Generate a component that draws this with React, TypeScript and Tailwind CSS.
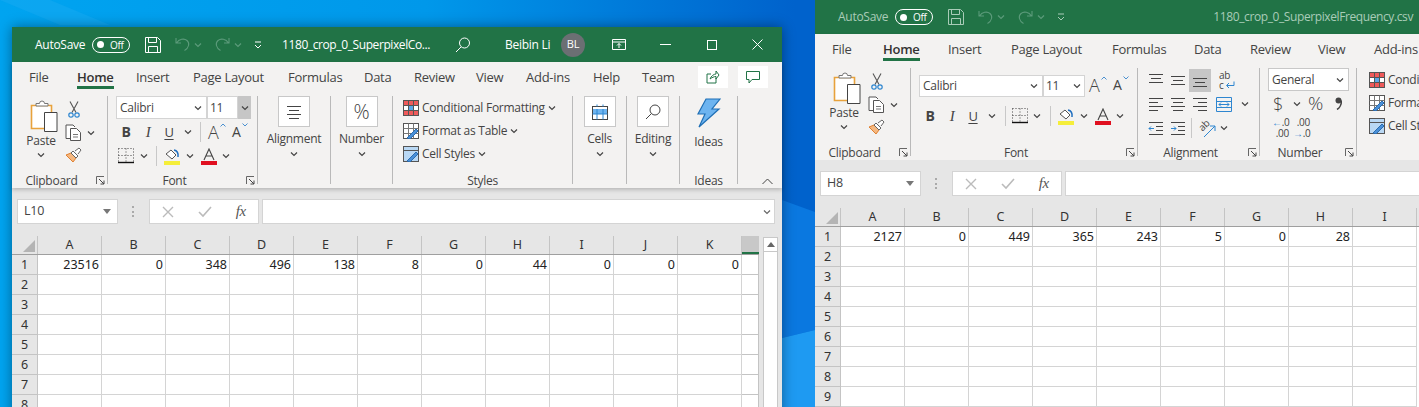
import React from "react";

const ui = { fontFamily: '"Open Sans", "Noto Sans", sans-serif' };

function Chev({ c = "#444", className = "" }: { c?: string; className?: string }) {
  return (
    <svg width="8" height="6" viewBox="0 0 8 6" className={`shrink-0 ${className}`}>
      <path d="M1 1.500 L4 4.500 L7 1.500" fill="none" stroke={c} strokeWidth="1.200" />
    </svg>
  );
}

function Launcher() {
  return (
    <svg width="9" height="9" viewBox="0 0 9 9" className="absolute right-[2px] bottom-[-1px]">
      <path d="M.5 8V.5H8" fill="none" stroke="#666" />
      <path d="M3 3l5 5M8 4.500V8H4.500" fill="none" stroke="#444" />
    </svg>
  );
}

function Group({ w, label, launcher, children }: { w: number; label: string; launcher?: boolean; children: React.ReactNode }) {
  return (
    <div className="relative flex h-[88px] shrink-0 flex-col border-r border-[#b9b9b9]" style={{ width: w }}>
      <div className="min-h-0 flex-1">{children}</div>
      <div className={`mb-[-4px] h-[14px] text-center text-[12px] leading-[14px] text-[#444] ${launcher ? "pr-[16px]" : ""}`}>{label}</div>
      {launcher && <Launcher />}
    </div>
  );
}

function PasteIcon() {
  return (
    <svg width="28" height="32" viewBox="0 0 28 32" className="shrink-0">
      <path d="M1.500 5.500h20v23h-20z" fill="#fff" stroke="#e8a23c" strokeWidth="1.600" />
      <path d="M6 6V3.500h3.500a2.500 2.500 0 0 1 5 0H18V6z" fill="#fff" stroke="#777" />
      <path d="M14.500 12.500h12.500v19H14.500z" fill="#fff" stroke="#444" />
    </svg>
  );
}
function Scissors() {
  return (
    <svg width="12" height="17" viewBox="0 0 12 17" className="ml-[3px]">
      <path d="M2 .5l6 11M10 .5l-6 11" fill="none" stroke="#555" strokeWidth="1.100" />
      <circle cx="3" cy="14" r="2.200" fill="none" stroke="#2e86d0" strokeWidth="1.200" />
      <circle cx="9" cy="14" r="2.200" fill="none" stroke="#2e86d0" strokeWidth="1.200" />
    </svg>
  );
}
function CopyIcon() {
  return (
    <svg width="17" height="17" viewBox="0 0 17 17">
      <path d="M5 14.500H1V1h7l2 2" fill="#fff" stroke="#555" />
      <path d="M5.500 4.500h6l4 4v8h-10z" fill="#fff" stroke="#555" />
      <path d="M8 10.500h5M8 13h5" stroke="#777" />
    </svg>
  );
}
function Brush() {
  return (
    <svg width="17" height="16" viewBox="0 0 17 16">
      <path d="M1 8l5-2 5 5-3 4z" fill="#f5b880" stroke="#e08030" />
      <path d="M6 6l5 5 2-2-5-5z" fill="#fff" stroke="#666" />
      <path d="M10 4l4-3 2 2-3 4" fill="#fff" stroke="#666" />
    </svg>
  );
}
function BorderIcon() {
  return (
    <svg width="16" height="16" viewBox="0 0 16 16">
      <path d="M.5.500h15M.5 7.500h15M.5.500v13M8 .500v13M15.500.500v13" stroke="#444" strokeDasharray="1 2" fill="none" />
      <path d="M0 14.500h16" stroke="#111" strokeWidth="1.400" />
    </svg>
  );
}
function FillIcon() {
  return (
    <svg width="17" height="17" viewBox="0 0 17 17">
      <path d="M2 6l5-4 5 5-4 4z" fill="#fff" stroke="#555" />
      <path d="M10 2c3 .5 4.500 3 4 7" fill="none" stroke="#1f6fc0" strokeWidth="1.500" />
      <rect x="0" y="13" width="16" height="4" fill="#f5ee3a" />
    </svg>
  );
}
function FontColor() {
  return (
    <svg width="16" height="17" viewBox="0 0 16 17">
      <path d="M3 12L8 1l5 11M5 8h6" fill="none" stroke="#444" strokeWidth="1.100" />
      <rect x="0" y="13" width="16" height="4" fill="#e01020" />
    </svg>
  );
}
function GrowA({ up }: { up: boolean }) {
  return (
    <div className="relative flex items-start" style={{ width: up ? 18 : 16 }}>
      <span className={up ? "text-[18px] font-light leading-[20px] text-[#444]" : "text-[14px] leading-[20px] text-[#444]"}>A</span>
      <svg width="6" height="4" viewBox="0 0 6 4" className="absolute right-0 top-[1px]">
        <path d={up ? "M.5 3.500L3 1l2.500 2.500" : "M.5.500L3 3l2.500-2.500"} fill="none" stroke="#4a90d0" />
      </svg>
    </div>
  );
}
function BIU() {
  return (
    <>
      <span className="w-[22px] text-center text-[14px] font-bold leading-[20px] text-[#444]">B</span>
      <span className="w-[22px] text-center text-[15px] italic leading-[20px] text-[#444]" style={{ fontFamily: '"Liberation Serif", serif' }}>I</span>
      <span className="w-[20px] text-center text-[13px] leading-[20px] text-[#444] underline underline-offset-2">U</span>
    </>
  );
}
function VSep({ h = 20 }: { h?: number }) {
  return <div className="w-px shrink-0 bg-[#c8c8c8]" style={{ height: h }} />;
}

function ClipboardGroup() {
  return (
    <Group w={96} label="Clipboard" launcher>
      <div className="flex pl-[18px] pt-[4px]">
        <div className="flex w-[22px] flex-col items-center">
          <div className="w-[22px]"><PasteIcon /></div>
          <span className="mt-[1px] text-[12px] leading-[16px] text-[#444]">Paste</span>
          <Chev className="mt-[3px]" />
        </div>
        <div className="ml-[13px] flex flex-col gap-[6px] pt-[1px]">
          <Scissors />
          <div className="flex items-center gap-[5px]"><CopyIcon /><Chev /></div>
          <Brush />
        </div>
      </div>
    </Group>
  );
}

function BigGroup({ w, label, icon }: { w: number; label: string; icon: React.ReactNode }) {
  return (
    <Group w={w} label="">
      <div className="flex flex-col items-center" style={{ width: w - 1 }}>
        <div className="flex h-[31px] w-[32px] items-center justify-center border border-[#c8c8c8] bg-white">{icon}</div>
        <span className="mt-[3px] text-[12px] leading-[18px] text-[#444]">{label}</span>
        <Chev className="mt-[3px]" />
      </div>
    </Group>
  );
}

function AlignLines({ kind, c = "#444" }: { kind: "top" | "mid" | "bot" | "l" | "c" | "r"; c?: string }) {
  const m: Record<string, string> = {
    top: "M1 2.500h14M3 6.500h10M1 10.500h14",
    mid: "M1 4.500h14M3 8.500h10M1 12.500h14",
    bot: "M1 6.500h14M3 10.500h10M1 14.500h14",
    l: "M1 2.500h14M1 6.500h9M1 10.500h14M1 14.500h9",
    c: "M1 2.500h14M3 6.500h10M1 10.500h14M3 14.500h10",
    r: "M1 2.500h14M6 6.500h9M1 10.500h14M6 14.500h9",
  };
  return (
    <svg width="16" height="16" viewBox="0 0 16 16" className="shrink-0"><path d={m[kind]} stroke={c} fill="none" /></svg>
  );
}

function IndentIcon({ inc }: { inc?: boolean }) {
  return (
    <svg width="16" height="16" viewBox="0 0 16 16" className="shrink-0">
      <path d="M1 2.500h14M8 6.500h7M8 10.500h7M1 14.500h14" stroke="#444" fill="none" />
      <path d={inc ? "M1 8.500h5M4 6.500l2 2-2 2" : "M1 8.500h5M3 6.500l-2 2 2 2"} stroke="#2e86d0" fill="none" />
    </svg>
  );
}

function StyleRow({ kind, label, chev }: { kind: 0 | 1 | 2; label: string; chev?: boolean }) {
  return (
    <div className="flex h-[23px] items-center gap-[3px] whitespace-nowrap text-[12px] text-[#444]">
      <svg width="16" height="16" viewBox="0 0 16 16" className="shrink-0">
        {kind === 0 ? (
          <>
            <rect x=".5" y=".5" width="15" height="15" fill="#fff" stroke="#555" />
            <rect x="1" y="1" width="14" height="4.500" fill="#ef5a5a" />
            <rect x="1" y="10.500" width="14" height="4.500" fill="#ef5a5a" />
            <rect x="6" y="5.500" width="4" height="5" fill="#5aa8e8" />
            <path d="M5.500.500v15M10.500.500v15M.5 5.500h15M.5 10.500h15" stroke="#555" />
          </>
        ) : (
          <>
            <rect x=".5" y=".5" width="15" height="15" fill={kind === 1 ? "#fff" : "#b9d8f4"} stroke="#555" />
            {kind === 1 && <path d="M5.500.500v15M10.500.500v15M.5 5.500h15M.5 10.500h15" stroke="#777" />}
            {kind === 2 && <path d="M.5 4.500h15" stroke="#555" />}
            <path d="M4 15l9-9 2 2-8 8z" fill="#4a90d8" stroke="#2a6cb0" />
          </>
        )}
      </svg>
      <span>{label}</span>
      {chev && <Chev />}
    </div>
  );
}

function IdeasGroup() {
  return (
    <Group w={58} label="Ideas">
      <div className="flex flex-col items-center pt-[2px]">
        <svg width="24" height="30" viewBox="0 0 24 30">
          <path d="M9 1h14L15 11h7L2 29l6-13H1z" fill="#6db4f0" stroke="#1f6fb5" strokeWidth="1.200" />
        </svg>
        <span className="mt-[5px] text-[12px] leading-[18px] text-[#444]">Ideas</span>
      </div>
    </Group>
  );
}

function TitleIcons({ dim }: { dim?: boolean }) {
  const c = dim ? "#a9ccb8" : "#fff";
  return (
    <>
      <svg width="16" height="16" viewBox="0 0 16 16" className="shrink-0">
        <path d="M.5.500h12l3 3v12H.5z M3.500.500v5h8v-5 M3.500 15.500v-6h9v6" fill="none" stroke={c} />
      </svg>
      <div className="ml-[14px] flex items-center gap-[4px]">
        <svg width="15" height="15" viewBox="0 0 15 15"><path d="M1 1v5h5M1.500 6C4 2 9 1 12 3.500s2 7.500-2.500 10" fill="none" stroke="#5b9a7a" strokeWidth="1.100" /></svg>
        <Chev c="#5b9a7a" />
      </div>
      <div className="ml-[13px] flex items-center gap-[4px]">
        <svg width="15" height="15" viewBox="0 0 15 15"><path d="M14 1v5H9M13.500 6C11 2 6 1 3 3.500s-2 7.500 2.500 10" fill="none" stroke="#5b9a7a" strokeWidth="1.100" /></svg>
        <Chev c="#5b9a7a" />
      </div>
      <svg width="8" height="8" viewBox="0 0 8 8" className="ml-[12px]"><path d="M1 1h6M1 4l3 3 3-3" fill="none" stroke={c} /></svg>
    </>
  );
}

function Toggle() {
  return (
    <div className="flex h-[16px] w-[38px] shrink-0 items-center rounded-full border border-white pl-[4px]">
      <div className="h-[7px] w-[7px] rounded-full bg-white" />
      <span className="ml-[6px] text-[10px] leading-none text-white">Off</span>
    </div>
  );
}

function Tabs({ items }: { items: [string, number, number][] }) {
  return (
    <div className="flex h-[30px] items-start pt-[5px]">
      {items.map(([t, ml, w]) => (
        <div key={t} className="relative shrink-0 whitespace-nowrap text-[13px] leading-[20px]" style={{ marginLeft: ml, width: w, color: t === "Home" ? "#333" : "#444", fontWeight: t === "Home" ? 600 : 400 }}>
          {t}
          {t === "Home" && <div className="absolute left-0 right-0 top-[19px] h-[3px] bg-[#217346]" />}
        </div>
      ))}
    </div>
  );
}

function NameBox({ name }: { name: string }) {
  return (
    <div className="flex h-[25px] w-[101px] shrink-0 items-center justify-between border border-[#d4d4d4] bg-white pl-[6px] pr-[6px] text-[12.500px] text-[#444]">
      <span>{name}</span>
      <svg width="8" height="5" viewBox="0 0 8 5"><path d="M0 0h8L4 5z" fill="#777" /></svg>
    </div>
  );
}

function Formula({ name, inputW, chevron }: { name: string; inputW: number; chevron?: boolean }) {
  return (
    <div className="flex h-[48px] shrink-0 items-start bg-[#e6e6e6] pl-[5px] pt-[11px]">
      <NameBox name={name} />
      <div className="ml-[14px] mt-[7px] flex h-[11px] w-[2px] flex-col justify-between">
        <div className="h-[2px] w-[2px] bg-[#aaa]" /><div className="h-[2px] w-[2px] bg-[#aaa]" /><div className="h-[2px] w-[2px] bg-[#aaa]" />
      </div>
      <div className="ml-[15px] flex h-[25px] w-[110px] shrink-0 items-center justify-between border border-[#d4d4d4] bg-white pl-[12px] pr-[12px]">
        <svg width="12" height="12" viewBox="0 0 12 12"><path d="M1 1l10 10M11 1L1 11" stroke="#bbb" strokeWidth="1.400" /></svg>
        <svg width="14" height="12" viewBox="0 0 14 12"><path d="M1 6l4 4 8-9" fill="none" stroke="#bbb" strokeWidth="1.600" /></svg>
        <span className="text-[15px] italic leading-none text-[#555]" style={{ fontFamily: '"Liberation Serif", serif' }}>fx</span>
      </div>
      <div className="ml-[3px] flex h-[25px] shrink-0 items-center justify-end border border-[#d4d4d4] bg-white pr-[3px]" style={{ width: inputW }}>
        {chevron && <Chev c="#666" />}
      </div>
    </div>
  );
}

const headers = ["A", "B", "C", "D", "E", "F", "G", "H", "I", "J", "K", "L"];

function Grid({ data, cols, lastW, headerH, rows }: { data: (number | "")[]; cols: number; lastW?: number; headerH: number; rows: number }) {
  const num = { fontFamily: '"Noto Sans", "Open Sans", sans-serif' };
  return (
    <div className="min-w-0 flex-1 bg-white text-[12.500px] tracking-normal text-[#222]" style={num}>
      <div className="flex border-b border-[#9f9f9f] bg-[#e6e6e6]" style={{ height: headerH }}>
        <div className="flex w-[26px] shrink-0 items-end justify-end border-r border-[#c4c4c4] pb-[2px] pr-[2px]">
          <svg width="12" height="12" viewBox="0 0 12 12"><path d="M12 0v12H0z" fill="#b4b4b4" /></svg>
        </div>
        {headers.slice(0, cols).map((h) => (
          <div key={h} className="flex w-[64px] shrink-0 items-center justify-center border-r border-[#c4c4c4] pt-[1px] text-[#333]">{h}</div>
        ))}
        {lastW && <div className="shrink-0 border-b-2 border-[#217346] bg-[#c8c8c8]" style={{ width: lastW }} />}
      </div>
      {Array.from({ length: rows }, (_, r) => (
        <div key={r} className="flex h-[20px]">
          <div className="flex w-[26px] shrink-0 items-center justify-center border-b border-r border-[#c4c4c4] bg-[#e6e6e6] pt-[2px] text-[#333]">{r + 1}</div>
          {headers.slice(0, cols).map((h, i) => (
            <div key={h} className="flex w-[64px] shrink-0 items-center justify-end border-b border-r border-[#d4d4d4] pr-[2px] pt-[2px]">{r === 0 ? data[i] : ""}</div>
          ))}
          {lastW && <div className="shrink-0 border-b border-r border-[#c4c4c4]" style={{ width: lastW }} />}
        </div>
      ))}
    </div>
  );
}

function LeftWindow() {
  return (
    <div className="absolute left-[12px] top-[27px] flex h-[400px] w-[770px] flex-col bg-[#e6e6e6] tracking-[-0.27px] shadow-[0_0_12px_rgba(0,0,0,0.4)]" style={ui}>
      <div className="flex h-[35px] shrink-0 items-center bg-[#217346] pl-[23px] text-[12px] text-white">
        <span className="w-[51px]">AutoSave</span>
        <div className="ml-[6px]"><Toggle /></div>
        <div className="ml-[15px] flex items-center"><TitleIcons /></div>
        <span className="ml-[20px] w-[150px] whitespace-nowrap tracking-[-0.4px]">1180_crop_0_SuperpixelCo...</span>
        <svg width="16" height="16" viewBox="0 0 16 16" className="ml-[23px] shrink-0"><circle cx="9.500" cy="6" r="5" fill="none" stroke="#fff" /><path d="M6 10l-5 5" stroke="#fff" /></svg>
        <span className="ml-[34px] w-[47px] whitespace-nowrap">Beibin Li</span>
        <div className="ml-[9px] flex h-[24px] w-[24px] shrink-0 items-center justify-center rounded-full bg-[#6b6f73] text-[11px]">BL</div>
        <svg width="14" height="11" viewBox="0 0 14 11" className="ml-[27px] shrink-0"><path d="M.5.500h13v10H.5zM.5 3h13M7 9V4.500M5 6.500l2-2 2 2" fill="none" stroke="#fff" /></svg>
        <div className="ml-[34px] h-px w-[11px] bg-white" />
        <div className="ml-[36px] h-[10px] w-[10px] border border-white" />
        <svg width="11" height="11" viewBox="0 0 11 11" className="ml-[35px]"><path d="M.5.500l10 10M10.500.500l-10 10" stroke="#fff" /></svg>
      </div>
      <div className="relative h-[126px] shrink-0 bg-[#f3f2f1] shadow-[0_2px_4px_rgba(0,0,0,0.2)]">
        <Tabs items={[["File", 17, 18], ["Home", 30, 37], ["Insert", 22, 32], ["Page Layout", 25, 71], ["Formulas", 24, 53], ["Data", 23, 27], ["Review", 23, 40], ["View", 22, 27], ["Add-ins", 23, 45], ["Help", 22, 27], ["Team", 22, 31]]} />
        <div className="absolute right-[54px] top-[4px] flex h-[22px] w-[30px] items-center justify-center bg-white">
          <svg width="14" height="14" viewBox="0 0 14 14"><path d="M10 8v5H1V4h4M4 9c1-3 4-5 6-5V1l3 4-3 4V6.500c-2 0-4 1-6 2.500" fill="none" stroke="#217346" /></svg>
        </div>
        <div className="absolute right-[14px] top-[4px] flex h-[22px] w-[30px] items-center justify-center bg-white">
          <svg width="14" height="13" viewBox="0 0 14 13"><path d="M.5.500h13v8H6L3 12V8.500H.5z" fill="none" stroke="#217346" /></svg>
        </div>
        <div className="mt-[4px] flex h-[88px]">
          <ClipboardGroup />
          <Group w={150} label="Font" launcher>
            <div className="flex h-[23px] items-start pl-[8px]">
              <div className="flex h-[23px] w-[91px] items-center justify-between border border-[#d4d4d4] bg-white pl-[3px] pr-[4px] text-[12px] text-[#444]">Calibri<Chev /></div>
              <div className="flex h-[23px] w-[31px] items-center border border-[#d4d4d4] bg-white pl-[2px] text-[12px] text-[#444]">11</div>
              <div className="flex h-[23px] w-[13px] items-center justify-center bg-[#c6c6c6]"><Chev /></div>
            </div>
            <div className="mt-[1px] flex h-[23px] items-center pl-[7px]">
              <BIU />
              <Chev className="ml-[5px]" />
              <div className="ml-[8px]"><VSep /></div>
              <div className="ml-[7px]"><GrowA up /></div>
              <div className="ml-[6px]"><GrowA up={false} /></div>
            </div>
            <div className="mt-[1px] flex h-[24px] items-center pl-[10px]">
              <BorderIcon />
              <Chev className="ml-[6px]" />
              <div className="ml-[8px]"><VSep /></div>
              <div className="ml-[7px]"><FillIcon /></div>
              <Chev className="ml-[5px]" />
              <div className="ml-[7px]"><FontColor /></div>
              <Chev className="ml-[5px]" />
            </div>
          </Group>
          <BigGroup w={73} label="Alignment" icon={<AlignLines kind="c" />} />
          <BigGroup w={62} label="Number" icon={<span className="text-[20px] font-light leading-none text-[#444]">%</span>} />
          <Group w={180} label="Styles">
            <div className="pl-[10px]">
              <StyleRow kind={0} label="Conditional Formatting" chev />
              <StyleRow kind={1} label="Format as Table" chev />
              <StyleRow kind={2} label="Cell Styles" chev />
            </div>
          </Group>
          <BigGroup w={54} label="Cells" icon={<svg width="16" height="16" viewBox="0 0 16 16"><rect x=".5" y="2.500" width="15" height="13" fill="#fff" stroke="#444" /><rect x="1" y="5" width="14" height="5" fill="#6db4f0" /><path d="M.5 10h15M5 5v10.500M11 5v10.500M5 .5v2M11 .5v2" stroke="#2e86d0" /></svg>} />
          <BigGroup w={53} label="Editing" icon={<svg width="16" height="16" viewBox="0 0 16 16"><circle cx="10" cy="6" r="5" fill="none" stroke="#444" /><path d="M6.500 9.500L1 15" stroke="#444" /></svg>} />
          <IdeasGroup />
        </div>
        <svg width="11" height="7" viewBox="0 0 11 7" className="absolute bottom-[3px] right-[9px]"><path d="M.5 6L5.500 1l5 5" fill="none" stroke="#444" /></svg>
      </div>
      <Formula name="L10" inputW={513} chevron />
      <div className="flex min-h-0 flex-1 overflow-hidden">
        <Grid data={[23516, 0, 348, 496, 138, 8, 0, 44, 0, 0, 0]} cols={11} lastW={17} headerH={19} rows={8} />
        <div className="ml-[4px] mr-[4px] mt-[1px] flex w-[15px] shrink-0 flex-col border-x border-[#c8c8c8] bg-white">
          <div className="flex h-[15px] items-center justify-center border-y border-[#c8c8c8]">
            <svg width="8" height="5" viewBox="0 0 8 5"><path d="M0 5h8L4 0z" fill="#666" /></svg>
          </div>
        </div>
      </div>
    </div>
  );
}

function RightWindow() {
  return (
    <div className="absolute left-[815px] top-0 flex h-[407px] w-[604px] flex-col overflow-hidden bg-[#e6e6e6] tracking-[-0.27px]" style={ui}>
      <div className="flex h-[34px] shrink-0 items-center bg-[#217346] pl-[23px] text-[12px] text-[#a9ccb8]">
        <span className="w-[51px]">AutoSave</span>
        <div className="ml-[6px]"><Toggle /></div>
        <div className="ml-[15px] flex items-center"><TitleIcons dim /></div>
        <span className="ml-auto mr-[6px] whitespace-nowrap tracking-[-0.4px]">1180_crop_0_SuperpixelFrequency.csv</span>
      </div>
      <div className="h-[126px] shrink-0 bg-[#f3f2f1] shadow-[0_2px_4px_rgba(0,0,0,0.2)]">
        <Tabs items={[["File", 17, 19], ["Home", 32, 37], ["Insert", 28, 32], ["Page Layout", 31, 71], ["Formulas", 30, 53], ["Data", 29, 27], ["Review", 29, 40], ["View", 28, 27], ["Add-ins", 29, 45]]} />
        <div className="mt-[4px] flex h-[88px]">
          <ClipboardGroup />
          <Group w={227} label="Font" launcher>
            <div className="flex h-[34px] items-start pl-[8px] pt-[7px]">
              <div className="flex h-[22px] w-[124px] items-center justify-between border border-[#d4d4d4] bg-white pl-[3px] pr-[4px] text-[12px] text-[#444]">Calibri<Chev /></div>
              <div className="flex h-[22px] w-[42px] items-center justify-between border border-[#d4d4d4] bg-white pl-[2px] pr-[3px] text-[12px] text-[#444]">11<Chev /></div>
              <div className="ml-[4px]"><GrowA up /></div>
              <div className="ml-[6px]"><GrowA up={false} /></div>
            </div>
            <div className="mt-[2px] flex h-[24px] items-center pl-[8px]">
              <BIU />
              <Chev className="ml-[5px]" />
              <div className="ml-[9px]"><VSep /></div>
              <div className="ml-[6px]"><BorderIcon /></div>
              <Chev className="ml-[5px]" />
              <div className="ml-[9px]"><VSep /></div>
              <div className="ml-[7px]"><FillIcon /></div>
              <Chev className="ml-[5px]" />
              <div className="ml-[7px]"><FontColor /></div>
              <Chev className="ml-[5px]" />
            </div>
          </Group>
          <Group w={122} label="Alignment" launcher>
            <div className="flex flex-col pl-[10px]">
              <div className="flex h-[24px] items-center gap-[6px]">
                <AlignLines kind="top" />
                <AlignLines kind="mid" />
                <div className="-ml-[3px] flex h-[23px] w-[22px] shrink-0 items-center justify-center bg-[#c6c6c6]"><AlignLines kind="bot" /></div>
                <div className="-ml-[2px] ml-[2px] relative h-[20px] w-[16px] shrink-0 text-[10px] leading-[10px] text-[#444]">ab<br />c
                  <svg width="10" height="8" viewBox="0 0 10 8" className="absolute bottom-[1px] right-0"><path d="M9 .5v4H2M4 2L1.500 4.500 4 7" fill="none" stroke="#2e86d0" /></svg>
                </div>
              </div>
              <div className="flex h-[24px] items-center gap-[6px]">
                <AlignLines kind="l" />
                <AlignLines kind="c" />
                <AlignLines kind="r" />
                <svg width="16" height="15" viewBox="0 0 16 15" className="ml-[2px] shrink-0"><path d="M.5.500h15v14H.5z M.5 4.500h15M.5 10.500h15M3 7.500h10M5 5.500l-2 2 2 2M11 5.500l2 2-2 2" fill="none" stroke="#2e86d0" /></svg>
                <Chev className="ml-[3px]" />
              </div>
              <div className="flex h-[24px] items-center gap-[6px]">
                <IndentIcon />
                <IndentIcon inc />
                <div className="-ml-[1px]"><VSep /></div>
                <div className="relative -ml-[1px] h-[20px] w-[20px] shrink-0">
                  <span className="absolute left-[1px] top-[2px] -rotate-45 text-[10px] leading-none text-[#444]">ab</span>
                  <svg width="16" height="16" viewBox="0 0 16 16" className="absolute bottom-0 right-0"><path d="M3 15L14 4M14 4v5M14 4H9" fill="none" stroke="#2e86d0" /></svg>
                </div>
                <Chev className="-ml-[3px]" />
              </div>
            </div>
          </Group>
          <Group w={97} label="Number" launcher>
            <div className="flex flex-col pl-[8px]">
              <div className="flex h-[23px] w-[81px] items-center justify-between border border-[#c8c8c8] bg-white pl-[3px] pr-[4px] text-[12px] text-[#444]">General<Chev /></div>
              <div className="flex h-[25px] items-center pl-[5px] text-[#444]">
                <span className="w-[12px] text-[18px] font-light leading-none">$</span>
                <Chev className="ml-[8px]" />
                <span className="ml-[7px] w-[16px] text-[19px] font-light leading-none">%</span>
                <svg width="7" height="13" viewBox="0 0 7 13" className="ml-[11px]"><circle cx="3.500" cy="3.500" r="3" fill="#444" /><path d="M6.500 3.500C6.500 8 4.500 11 2 12.500" fill="none" stroke="#444" strokeWidth="1.500" /></svg>
              </div>
              <div className="flex h-[24px] items-center gap-[4px] pl-[4px] text-[10px] leading-[11px] text-[#444]">
                <span className="w-[17px] text-right"><span className="text-[#2e86d0]">←</span>.0<br />.00</span>
                <span className="w-[17px] text-right">.00<br /><span className="text-[#2e86d0]">→</span>.0</span>
              </div>
            </div>
          </Group>
          <div className="pl-[12px]">
            <StyleRow kind={0} label="Conditional Formatting" />
            <StyleRow kind={1} label="Format as Table" />
            <StyleRow kind={2} label="Cell Styles" />
          </div>
        </div>
      </div>
      <Formula name="H8" inputW={400} />
      <Grid data={[2127, 0, 449, 365, 243, 5, 0, 28, "", "", ""]} cols={9} headerH={19} rows={9} />
    </div>
  );
}

function Wallpaper() {
  return (
    <svg width="1419" height="407" viewBox="0 0 1419 407" className="absolute inset-0">
      <defs>
        <linearGradient id="sky" x1="0" y1="0" x2="1" y2="0">
          <stop offset="0" stopColor="#00a4f0" />
          <stop offset="0.3" stopColor="#0098ea" />
          <stop offset="0.56" stopColor="#0062cc" />
          <stop offset="1" stopColor="#0062cc" />
        </linearGradient>
      </defs>
      <rect width="1419" height="407" fill="url(#sky)" />
      <path d="M50 0L110 25L60 25L0 0z" fill="#18aaf2" opacity="0.5" />
      <path d="M782 200L815 212V330L782 338z" fill="#0a78e0" />
      <path d="M782 338L815 330V407H782z" fill="#1e9af2" />
    </svg>
  );
}

export default function App() {
  return (
    <div className="relative h-[407px] w-[1419px] overflow-hidden bg-[#0078d7]">
      <Wallpaper />
      <LeftWindow />
      <RightWindow />
    </div>
  );
}
